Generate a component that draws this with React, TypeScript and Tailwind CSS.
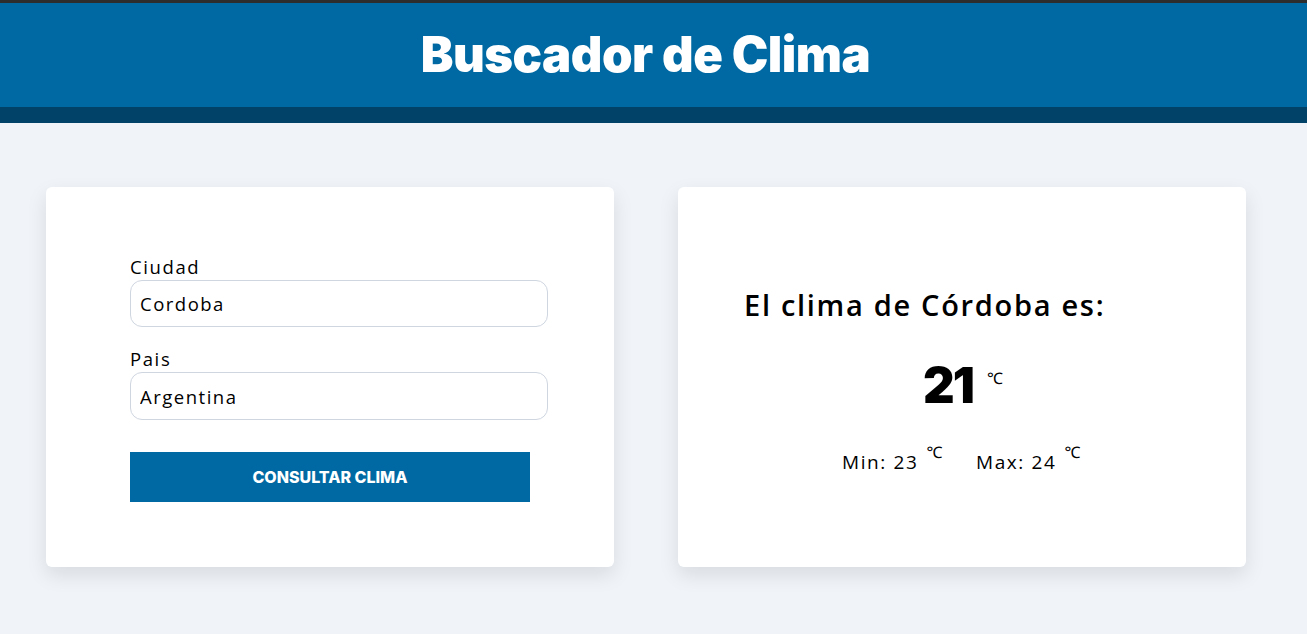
export default function App() {
  return (
    <div className="min-h-screen bg-[#f0f4f8] font-['Open_Sans','Noto_Sans',sans-serif] text-black">
      <div className="h-[3px] bg-[#2d2d2d]" />
      <header className="bg-[#0069a3] border-b-[16px] border-[#004268] h-[120px] flex items-center justify-center">
        <h1 className="font-['Inter',sans-serif] font-black text-white text-[49px] tracking-[-0.5px] leading-none -mt-[2px] mr-[16px]">
          Buscador de Clima
        </h1>
      </header>

      <main className="flex gap-[64px] px-[46px] pt-[64px]">
        <section className="w-[568px] h-[380px] bg-white rounded-[6px] shadow-[0_8px_20px_rgba(0,0,0,0.10)] pl-[84px] pt-[67px]">
          <form className="flex flex-col w-[418px]" onSubmit={(e) => e.preventDefault()}>
            <label className="text-[18.5px] leading-[26px] tracking-[1.6px]">Ciudad</label>
            <input
              defaultValue="Cordoba"
              className="h-[47px] rounded-[12px] border border-[#cfd6e0] px-[9px] text-[18.5px] tracking-[1.5px] outline-none"
            />
            <label className="text-[18.5px] leading-[26px] mt-[19px] tracking-[1.6px]">Pais</label>
            <input
              defaultValue="Argentina"
              className="h-[48px] rounded-[12px] border border-[#cfd6e0] px-[9px] text-[18.5px] tracking-[1.5px] outline-none"
            />
            <button
              type="submit"
              className="mt-[32px] w-[400px] h-[50px] bg-[#0069a3] text-white font-['Inter',sans-serif] font-extrabold text-[16px] uppercase tracking-[0px]"
            >
              Consultar Clima
            </button>
          </form>
        </section>

        <section className="w-[568px] h-[380px] bg-white rounded-[6px] shadow-[0_8px_20px_rgba(0,0,0,0.10)] pt-[100px]">
          <h2 className="pl-[66px] text-[29px] font-semibold leading-[36px] tracking-[1.7px]">
            El clima de Córdoba es:
          </h2>
          <div className="flex justify-center items-start mt-[35px] pl-[2px]">
            <span className="font-['Inter',sans-serif] font-black text-[49px] leading-[56px] tracking-[-2px]">21</span>
            <span className="text-[16px] ml-[14px] mt-[8px]">℃</span>
          </div>
          <div className="flex justify-center items-start mt-[26px] text-[19px] tracking-[1.6px]">
            <span className="mt-[8px]">Min: 23</span>
            <span className="text-[16px] ml-[8px]">℃</span>
            <span className="mt-[8px] ml-[32px]">Max: 24</span>
            <span className="text-[16px] ml-[8px]">℃</span>
          </div>
        </section>
      </main>
    </div>
  );
}
